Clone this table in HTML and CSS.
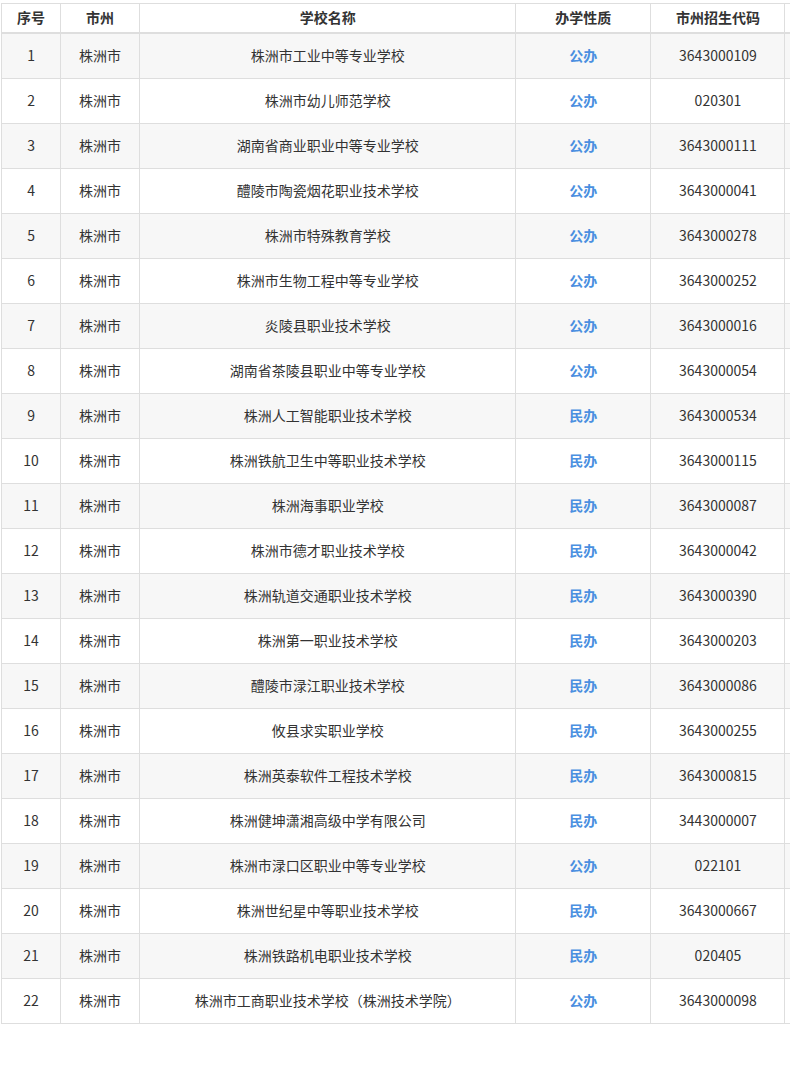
FILE: index.html
```html
<!DOCTYPE html>
<html lang="zh">
<head>
<meta charset="utf-8">
<title>株洲市学校</title>
<link rel="stylesheet" href="styles.css">
</head>
<body>
<div class="wrap">
<table class="schools">
<colgroup>
<col class="c-no"><col class="c-city"><col class="c-name"><col class="c-type"><col class="c-code"><col class="c-extra">
</colgroup>
<thead>
<tr><th>序号</th><th>市州</th><th>学校名称</th><th>办学性质</th><th>市州招生代码</th><th class="extra"></th></tr>
</thead>
<tbody>
<tr><td>1</td><td>株洲市</td><td>株洲市工业中等专业学校</td><td class="type">公办</td><td>3643000109</td><td class="extra"></td></tr>
<tr><td>2</td><td>株洲市</td><td>株洲市幼儿师范学校</td><td class="type">公办</td><td>020301</td><td class="extra"></td></tr>
<tr><td>3</td><td>株洲市</td><td>湖南省商业职业中等专业学校</td><td class="type">公办</td><td>3643000111</td><td class="extra"></td></tr>
<tr><td>4</td><td>株洲市</td><td>醴陵市陶瓷烟花职业技术学校</td><td class="type">公办</td><td>3643000041</td><td class="extra"></td></tr>
<tr><td>5</td><td>株洲市</td><td>株洲市特殊教育学校</td><td class="type">公办</td><td>3643000278</td><td class="extra"></td></tr>
<tr><td>6</td><td>株洲市</td><td>株洲市生物工程中等专业学校</td><td class="type">公办</td><td>3643000252</td><td class="extra"></td></tr>
<tr><td>7</td><td>株洲市</td><td>炎陵县职业技术学校</td><td class="type">公办</td><td>3643000016</td><td class="extra"></td></tr>
<tr><td>8</td><td>株洲市</td><td>湖南省茶陵县职业中等专业学校</td><td class="type">公办</td><td>3643000054</td><td class="extra"></td></tr>
<tr><td>9</td><td>株洲市</td><td>株洲人工智能职业技术学校</td><td class="type">民办</td><td>3643000534</td><td class="extra"></td></tr>
<tr><td>10</td><td>株洲市</td><td>株洲铁航卫生中等职业技术学校</td><td class="type">民办</td><td>3643000115</td><td class="extra"></td></tr>
<tr><td>11</td><td>株洲市</td><td>株洲海事职业学校</td><td class="type">民办</td><td>3643000087</td><td class="extra"></td></tr>
<tr><td>12</td><td>株洲市</td><td>株洲市德才职业技术学校</td><td class="type">民办</td><td>3643000042</td><td class="extra"></td></tr>
<tr><td>13</td><td>株洲市</td><td>株洲轨道交通职业技术学校</td><td class="type">民办</td><td>3643000390</td><td class="extra"></td></tr>
<tr><td>14</td><td>株洲市</td><td>株洲第一职业技术学校</td><td class="type">民办</td><td>3643000203</td><td class="extra"></td></tr>
<tr><td>15</td><td>株洲市</td><td>醴陵市渌江职业技术学校</td><td class="type">民办</td><td>3643000086</td><td class="extra"></td></tr>
<tr><td>16</td><td>株洲市</td><td>攸县求实职业学校</td><td class="type">民办</td><td>3643000255</td><td class="extra"></td></tr>
<tr><td>17</td><td>株洲市</td><td>株洲英泰软件工程技术学校</td><td class="type">民办</td><td>3643000815</td><td class="extra"></td></tr>
<tr><td>18</td><td>株洲市</td><td>株洲健坤潇湘高级中学有限公司</td><td class="type">民办</td><td>3443000007</td><td class="extra"></td></tr>
<tr><td>19</td><td>株洲市</td><td>株洲市渌口区职业中等专业学校</td><td class="type">公办</td><td>022101</td><td class="extra"></td></tr>
<tr><td>20</td><td>株洲市</td><td>株洲世纪星中等职业技术学校</td><td class="type">民办</td><td>3643000667</td><td class="extra"></td></tr>
<tr><td>21</td><td>株洲市</td><td>株洲铁路机电职业技术学校</td><td class="type">民办</td><td>020405</td><td class="extra"></td></tr>
<tr><td>22</td><td>株洲市</td><td>株洲市工商职业技术学校（株洲技术学院）</td><td class="type">公办</td><td>3643000098</td><td class="extra"></td></tr>
</tbody>
</table>
</div>
</body>
</html>
```
FILE: styles.css
```css
html, body {
  margin: 0;
  padding: 0;
  background: #fff;
  overflow: hidden;
}
.wrap {
  padding: 3px 0 0 1px;
}
.schools {
  border-collapse: collapse;
  table-layout: fixed;
  width: 790px;
  font-family: "Noto Sans CJK SC", "Noto Sans", sans-serif;
  font-size: 14px;
  color: #333;
}
.c-no { width: 59px; }
.c-city { width: 79px; }
.c-name { width: 376px; }
.c-type { width: 135px; }
.c-code { width: 134px; }
.c-extra { width: 6px; }
.schools th, .schools td {
  border: 1px solid #dedede;
  text-align: center;
  padding: 0 0 2px 0;
  white-space: nowrap;
  overflow: hidden;
}
.schools th {
  height: 26px;
  font-weight: bold;
  color: #333;
  border-bottom: 2px solid #dedede;
}
.schools td {
  height: 42px;
  font-weight: normal;
}
.schools tbody tr:nth-child(odd) td {
  background: #f7f7f7;
}
.schools td.type {
  color: #4a8fe0;
  font-weight: bold;
}
.schools .extra {
  border-right: none;
}
```
